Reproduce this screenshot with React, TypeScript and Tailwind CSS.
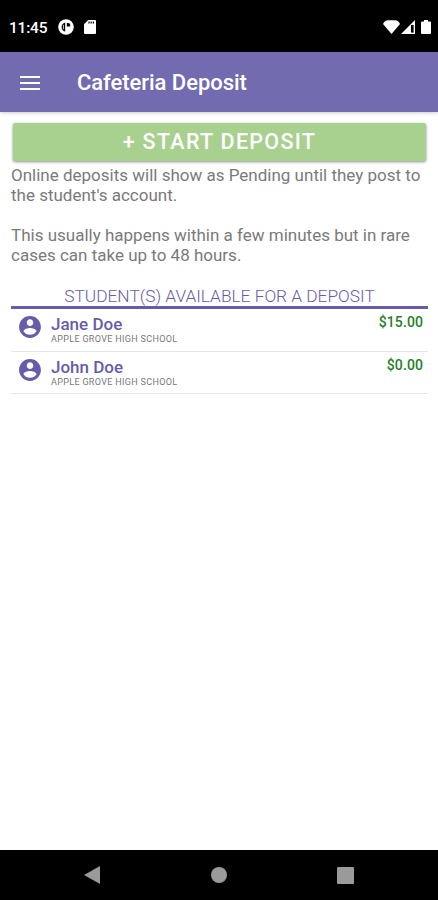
interface Student {
  name: string;
  school: string;
  balance: string;
}

const students: Student[] = [
  { name: 'Jane Doe', school: 'APPLE GROVE HIGH SCHOOL', balance: '$15.00' },
  { name: 'John Doe', school: 'APPLE GROVE HIGH SCHOOL', balance: '$0.00' },
];

function StatusBar() {
  return (
    <div className="flex h-[52px] items-center bg-black pt-[2px] pl-[9px] pr-[7px] text-white">
      <span className="w-[38px] pt-px text-[15.5px] leading-5 font-medium tracking-[-0.2px] whitespace-nowrap">
        11:45
      </span>
      <svg className="ml-[11px] h-4 w-4" viewBox="0 0 16 16">
        <circle cx="8" cy="8" r="7.8" fill="white" />
        <path d="M7.2 3.4V12.6C2.4 11.6 2.4 4.4 7.2 3.4z" fill="black" />
        <path d="M5.4 5.8v4.4" stroke="white" strokeWidth="0.8" />
        <path d="M8.8 4h1.4a2 2 0 0 1 2 2v1.6H8.8z" fill="black" />
      </svg>
      <svg className="ml-[10px] h-[14px] w-3" viewBox="0 0 12 14">
        <path d="M4.2 0H11a1 1 0 0 1 1 1v12a1 1 0 0 1-1 1H1a1 1 0 0 1-1-1V4.2z" fill="white" />
        <path d="M5 1.6v2M7.2 1.6v2M9.4 1.6v2" stroke="black" strokeWidth="1.2" />
      </svg>
      <svg className="ml-auto h-[14px] w-[17px]" viewBox="0 0 17 14">
        <path d="M0 4Q1.5 0.5 5 0.2H12Q15.5 0.5 17 4L8.5 14z" fill="white" />
      </svg>
      <svg className="ml-px h-[14px] w-[14px]" viewBox="0 0 14 14">
        <path d="M14 0V14H0z" fill="white" />
        <path d="M10 5h2.6v7.6H10z" fill="black" />
      </svg>
      <svg className="ml-[6px] h-[14px] w-[10px]" viewBox="0 0 10 14">
        <path d="M3 0h4v1.4h2a1 1 0 0 1 1 1V13a1 1 0 0 1-1 1H1a1 1 0 0 1-1-1V2.4a1 1 0 0 1 1-1h2z" fill="white" />
      </svg>
    </div>
  );
}

function Header() {
  return (
    <header className="relative flex h-[60px] items-center bg-[#736bb0] pl-[20px] shadow-[0_1px_4px_rgba(0,0,0,0.2)]">
      <button className="mt-px h-[14px] w-5" aria-label="Open menu">
        <svg className="h-[14px] w-5" viewBox="0 0 20 14" stroke="white" strokeWidth="2">
          <path d="M0 1h20M0 7h20M0 13h20" />
        </svg>
      </button>
      <h1 className="mt-[2px] ml-[37px] text-[22px] leading-7 font-medium tracking-[-0.05px] text-white">
        Cafeteria Deposit
      </h1>
    </header>
  );
}

function StudentRow({ student }: { student: Student }) {
  return (
    <li className="flex h-[42.5px] border-b border-[#e4e6e8] pr-[5px] pl-[7px]">
      <svg className="mt-[6px] h-6 w-6 shrink-0" viewBox="1 1 22 22" fill="#675caa">
        <path d="M12 2C6.48 2 2 6.48 2 12s4.48 10 10 10 10-4.48 10-10S17.52 2 12 2zm0 3c1.66 0 3 1.34 3 3s-1.34 3-3 3-3-1.34-3-3 1.34-3 3-3zm0 14.2a7.2 7.2 0 0 1-6-3.22c.03-1.99 4-3.08 6-3.08 1.99 0 5.97 1.09 6 3.08a7.2 7.2 0 0 1-6 3.22z" />
      </svg>
      <div className="ml-[9px] pt-[5px]">
        <div className="text-[17px] leading-5 font-medium text-[#675caa]">{student.name}</div>
        <div className="text-[9px] leading-[11px] tracking-[0.33px] text-[#777]">{student.school}</div>
      </div>
      <span className="ml-auto pt-[3px] text-[14px] leading-5 font-medium tracking-[0.1px] text-[#268026]">
        {student.balance}
      </span>
    </li>
  );
}

function NavigationBar() {
  return (
    <nav className="flex h-[50px] items-center justify-between bg-black pr-[84px] pl-[83px]">
      <svg className="h-5 w-[18px]" viewBox="0 0 18 20" fill="#9a9a9a">
        <path d="M17 1V19L1 10z" />
      </svg>
      <div className="h-4 w-4 rounded-full bg-[#9a9a9a]" />
      <div className="h-[17px] w-[17px] rounded-[1px] bg-[#9a9a9a]" />
    </nav>
  );
}

export default function App() {
  return (
    <div className="flex h-[900px] w-[438px] flex-col bg-white font-[Roboto,sans-serif]">
      <StatusBar />
      <Header />

      <main className="flex-1 pt-[11px] pr-[10px] pl-[11px]">
        <button className="ml-[2px] block h-[38px] w-[413px] rounded-[2px] bg-[#a8d08f] text-[21.5px] leading-[38px] font-medium tracking-[1.3px] text-white shadow-[0_1px_3px_rgba(0,0,0,0.45)]">
          + START DEPOSIT
        </button>

        <div className="mt-[4px] space-y-5 text-[17px] leading-5 text-[#7a7a7a]">
          <p>
            Online deposits will show as Pending until they post to
            <br />
            the student's account.
          </p>
          <p>
            This usually happens within a few minutes but in rare
            <br />
            cases can take up to 48 hours.
          </p>
        </div>

        <h2 className="mt-[21px] h-[23px] border-b-[3px] border-[#675caa] text-center text-[17.3px] leading-5 font-light text-[#675caa]">
          STUDENT(S) AVAILABLE FOR A DEPOSIT
        </h2>
        <ul>
          {students.map((student) => (
            <StudentRow key={student.name} student={student} />
          ))}
        </ul>
      </main>

      <NavigationBar />
    </div>
  );
}
